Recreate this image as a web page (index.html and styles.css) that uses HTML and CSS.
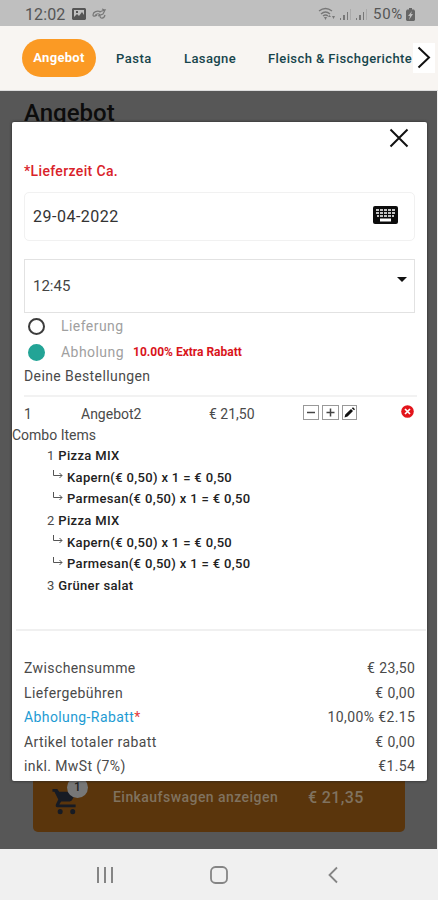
FILE: index.html
```
<!DOCTYPE html>
<html lang="de">
<head>
<meta charset="utf-8">
<title>Angebot</title>
<link rel="stylesheet" href="styles.css">
</head>
<body>
<div class="status">
  <span class="clock">12:02</span>
  <svg class="st-img" width="14" height="12" viewBox="0 0 14 12"><path fill="#555" fill-rule="evenodd" d="M1 0h12l1 1v10l-1 1H1l-1-1V1zM2 2v7l3-3 2 2 3-4 2 3V2zM4 3h2v2H4z"/></svg>
  <svg class="st-app" width="15" height="12" viewBox="0 0 15 12"><path fill="none" stroke="#777" stroke-width="1.2" d="M9 4C5 2 1 4 1 7c0 2 3 1 4 0M3 8c1-3 5-3 5 0s4 3 5-1M7 4l6-2-2 4-5 2M10 1l3 1"/></svg>
  <svg class="st-net" width="54" height="14" viewBox="0 0 54 14"><g fill="none" stroke="#777" stroke-width="1.4"><path d="M1 4q6.500-5 13 0M3 7q4.500-4 9 0M5 9q2.500-2 5 0"/></g><g fill="#777"><path d="M6 10l3 0-1.500 3zM10 10l1.500-2 1.500 2zM14 9l1.500 3 1.500-3z"/><path d="M22 11h1v2h-1zM25 8h2v5h-2zM29 5h1v8h-1z"/><path d="M38 11h1v2h-1zM41 8h2v5h-2zM45 5h1v8h-1z"/></g><path fill="#aaa" d="M32 2h1v11h-1zM48 2h1v11h-1z"/></svg>
  <span class="percent">50%</span>
  <svg width="9" height="13" viewBox="0 0 9 13"><path fill="#666" d="M3 0h3v1.500h2L9 3v9l-1 1H1l-1-1V3l1-1.500h2z"/><path fill="#bfbfbf" d="M6 3L2 8h2l-1 4 4-6H5z"/></svg>
</div>

<div class="tabs">
  <a class="tab current">Angebot</a>
  <a class="tab pasta">Pasta</a>
  <a class="tab lasagne">Lasagne</a>
  <a class="tab fleisch">Fleisch &amp; Fischgerichte</a>
  <span class="next"><svg width="22" height="30" viewBox="0 0 22 30"><path fill="none" stroke="#111" stroke-width="2" d="M5.500 4.500L16 14.500 5.500 24.500"/></svg></span>
</div>

<div class="page">
  <h1>Angebot</h1>
  <div class="cart">
    <span class="cart-icon">
      <svg width="26" height="27" viewBox="0 0 26 28"><path fill="#171b24" d="M0 1h5l2 3h18l-5 9-2 1H9l-2 3h17v3H6c-3 0-3-2-2-4l2-4L2 4H0z"/><circle cx="8" cy="24.500" r="2.600" fill="#171b24"/><circle cx="21" cy="24.500" r="2.600" fill="#171b24"/></svg>
      <i class="badge">1</i>
    </span>
    <span class="cart-text">Einkaufswagen anzeigen</span>
    <span class="cart-sum">€ 21,35</span>
  </div>
</div>

<div class="modal">
  <div class="top"><svg width="20" height="20" viewBox="0 0 20 20"><path stroke="#111" stroke-width="2" d="M1.500 1.500l17 17M18.500 1.500l-17 17"/></svg></div>
  <div class="form">
    <p class="label">*Lieferzeit Ca.</p>
    <div class="date">
      <span>29-04-2022</span>
      <svg width="25" height="18" viewBox="0 0 25 18"><rect width="25" height="18" rx="2" fill="#0c0c0c"/><path fill="#c4c4c4" d="M3 3h3v2H3zM7 3h3v2H7zM11 3h3v2h-3zM15 3h3v2h-3zM19 3h3v2h-3zM3 6h3v2H3zM7 6h3v2H7zM11 6h3v2h-3zM15 6h3v2h-3zM19 6h3v2h-3zM4 9h2v2H4zM7 9h3v2H7zM11 9h3v2h-3zM15 9h3v2h-3zM19 9h2v2h-2z"/><path fill="#fff" d="M7 12.500h11v3H7z"/></svg>
    </div>
    <div class="select"><span>12:45</span><i class="arrow"></i></div>
    <div class="radio"><i class="dot"></i><span>Lieferung</span></div>
    <div class="radio"><i class="dot on"></i><span>Abholung</span><b>10.00% Extra Rabatt</b></div>
    <p class="orders">Deine Bestellungen</p>
  </div>

  <div class="item">
    <span class="qty">1</span>
    <span class="name">Angebot2</span>
    <span class="price">€ 21,50</span>
    <span class="btns">
      <svg width="16" height="15" viewBox="0 0 16 15"><rect x=".5" y=".5" width="15" height="14" fill="#fff" stroke="#999"/><path stroke="#444" stroke-width="1.500" d="M4 7.500h8"/></svg>
      <svg width="17" height="15" viewBox="0 0 17 15"><rect x=".5" y=".5" width="16" height="14" fill="#fff" stroke="#999"/><path stroke="#444" stroke-width="1.500" d="M4.500 7.500h8M8.500 3.500v8"/></svg>
      <svg width="15" height="15" viewBox="0 0 15 15"><rect x=".5" y=".5" width="14" height="14" fill="#fff" stroke="#999"/><path fill="#111" d="M2.500 12.500l.8-3L9 4l2 2-5.500 5.500zM9.800 3.200L11 2.200l2 2L12 5.200z"/></svg>
    </span>
    <svg class="del" width="13" height="13" viewBox="0 0 13 13"><circle cx="6.500" cy="6.500" r="6.300" fill="#e3141b"/><path stroke="#fff" stroke-width="1.700" d="M4 4l5 5M9 4L4 9"/></svg>
  </div>
  <p class="combo">Combo Items</p>
  <ul class="list">
    <li>1 <b>Pizza MIX</b></li>
    <li class="sub"><svg width="11" height="10" viewBox="0 0 11 10"><path fill="none" stroke="#555" d="M1.500 0v5.500H10M7.500 3L10 5.500 7.500 8"/></svg><b>Kapern(€ 0,50) x 1 = € 0,50</b></li>
    <li class="sub"><svg width="11" height="10" viewBox="0 0 11 10"><path fill="none" stroke="#555" d="M1.500 0v5.500H10M7.500 3L10 5.500 7.500 8"/></svg><b>Parmesan(€ 0,50) x 1 = € 0,50</b></li>
    <li>2 <b>Pizza MIX</b></li>
    <li class="sub"><svg width="11" height="10" viewBox="0 0 11 10"><path fill="none" stroke="#555" d="M1.500 0v5.500H10M7.500 3L10 5.500 7.500 8"/></svg><b>Kapern(€ 0,50) x 1 = € 0,50</b></li>
    <li class="sub"><svg width="11" height="10" viewBox="0 0 11 10"><path fill="none" stroke="#555" d="M1.500 0v5.500H10M7.500 3L10 5.500 7.500 8"/></svg><b>Parmesan(€ 0,50) x 1 = € 0,50</b></li>
    <li>3 <b>Grüner salat</b></li>
  </ul>

  <div class="totals">
    <div class="row"><span>Zwischensumme</span><em>€ 23,50</em></div>
    <div class="row"><span>Liefergebühren</span><em>€ 0,00</em></div>
    <div class="row"><span class="blue">Abholung-Rabatt<i>*</i></span><em>10,00% €2.15</em></div>
    <div class="row"><span>Artikel totaler rabatt</span><em>€ 0,00</em></div>
    <div class="row"><span>inkl. MwSt (7%)</span><em>€1.54</em></div>
  </div>
</div>

<div class="navbar">
  <svg width="18" height="18" viewBox="0 0 18 18"><path stroke="#858585" stroke-width="2" d="M2 1v16M9 1v16M16 1v16"/></svg>
  <svg class="home" width="18" height="18" viewBox="0 0 18 18"><rect x="1" y="1" width="16" height="16" rx="4.500" fill="none" stroke="#858585" stroke-width="1.800"/></svg>
  <svg width="12" height="18" viewBox="0 0 12 18"><path fill="none" stroke="#858585" stroke-width="1.800" d="M10 1.500L2.500 9l7.500 7.500"/></svg>
</div>
</body>
</html>
```
FILE: styles.css
```
*{ margin:0; padding:0; box-sizing:border-box; list-style:none;}
body{
  width:438px;
  height:900px;
  position:relative;
  overflow:hidden;
  background:#f0f0f0;
  font-family:Roboto, "Liberation Sans", sans-serif;
  font-size:14px;
  color:#4a4a4a;
}
svg{ display:block; flex:none;}
i, em{ font-style:normal;}
span, b, p, em{ white-space:nowrap;}

.status{ height:26px; background:#bfbfbf; display:flex; align-items:center; padding:2px 23px 0 25px; color:#555;}
.clock{ font-size:16px; width:47px; letter-spacing:.1px;}
.st-app{ margin-left:6px;}
.st-net{ margin-left:auto;}
.percent{ font-size:15px; margin:0 3px 0 1px; letter-spacing:.7px;}

.tabs{ height:65px; background:#f8f5f2; display:flex; align-items:center; position:relative; font-size:13px; font-weight:500; color:#17454c; border-bottom:1px solid #ddd;}
.tab{ white-space:nowrap;}
.tab.current{ width:74px; height:38px; line-height:38px; margin-left:22px; text-align:center; background:#fb9a24; color:#fff; border-radius:19px; font-weight:700; letter-spacing:.3px;}
.pasta{ margin-left:20px; width:68px; letter-spacing:.5px;}
.lasagne{ width:84px; letter-spacing:.4px;}
.fleisch{ letter-spacing:.4px;}
.next{ position:absolute; right:3px; top:17px; width:22px; height:30px; background:#fff;}

.page{ height:758px; width:437px; background:#575757; padding:8px 32px 0 24px; display:flex; flex-direction:column; justify-content:space-between;}
h1{ font-size:24px; line-height:28px; font-weight:500; color:#0c0c0c;}
.cart{ height:56px; margin:0 0 17px 9px; background:#5a350c; border-radius:5px; display:flex; padding:12px 0 0 19px; color:#80725f; font-weight:500;}
.cart-icon{ position:relative; width:61px;}
.badge{ position:absolute; left:15px; top:-11px; width:21px; height:21px; line-height:20px; border-radius:50%; background:#777; color:#222; text-align:center; font-size:12px;}
.cart-text{ font-size:14px; line-height:18px; width:195px; letter-spacing:.45px;}
.cart-sum{ font-size:16px; line-height:20px; letter-spacing:.4px;}

.modal{ position:absolute; left:12px; top:122px; width:415px; height:659px; background:#fff; border-radius:2px; box-shadow:0 0 3px #222;}
.top{ height:37px; padding:6px 18px 0 0; display:flex; justify-content:flex-end;}
.form{ padding:0 12px; height:236px;}
.label{ height:33px; line-height:24px; font-size:14px; font-weight:500; color:#d9222a; letter-spacing:.35px;}
.date{ height:49px; border:1px solid #f1f1f1; border-radius:5px; padding:0 16px 0 8px; display:flex; align-items:center; justify-content:space-between; font-size:16px; color:#333; letter-spacing:.5px;}
.date svg{ margin-top:-3px;}
.select{ height:54px; margin-top:18px; border:1px solid #e2e2e2; padding:0 7px 0 8px; display:flex; align-items:center; justify-content:space-between; font-size:15px; color:#444;}
.arrow{ border:5px solid transparent; border-top-color:#111; border-bottom:0; margin-top:-14px;}
.radio{ height:26px; display:flex; align-items:center; padding-left:4px; color:#a0a0a0; letter-spacing:.45px;}
.dot{ width:17px; height:17px; border:2px solid #3c3c3c; border-radius:50%; margin-right:16px; flex:none;}
.dot.on{ background:#23a496; border-color:#23a496;}
.radio b{ margin-left:9px; font-size:12px; color:#d9141b; font-weight:700; letter-spacing:0;}
.orders{ line-height:23px; letter-spacing:.4px;}

.item{ height:32px; margin:0 10px 0 12px; border-top:2px solid #f2f2f2; display:flex; align-items:center; padding-top:3px;}
.qty{ width:57px;}
.name{ width:128px;}
.price{ width:94px;}
.btns{ display:flex; gap:3px; margin-top:-3px;}
.del{ margin:-4px 3px 0 auto;}
.combo{ line-height:18px; margin-top:-1px;}
.list{ padding:1px 0 0 35px;}
.list li{ height:21.600px; display:flex; align-items:center; gap:4px; font-size:13px;}
.list b{ font-weight:500; color:#222; letter-spacing:.34px;}
.list .sub{ padding-left:5px;}
.sub svg{ margin-top:-4px;}

.totals{ border-top:2px solid #f0f0f0; margin:33px 1px 0 4px; padding:25px 11px 0 8px;}
.row{ height:24.400px; display:flex; align-items:center; justify-content:space-between; letter-spacing:.4px;}
.row em{ margin-right:-.4px;}
.blue{ color:#1e9bd3;}
.blue i{ color:#e23b3b;}

.navbar{ height:51px; display:flex; align-items:center; padding:1px 99px 0 96px; justify-content:space-between;}
.home{ margin-right:3px;}
```
